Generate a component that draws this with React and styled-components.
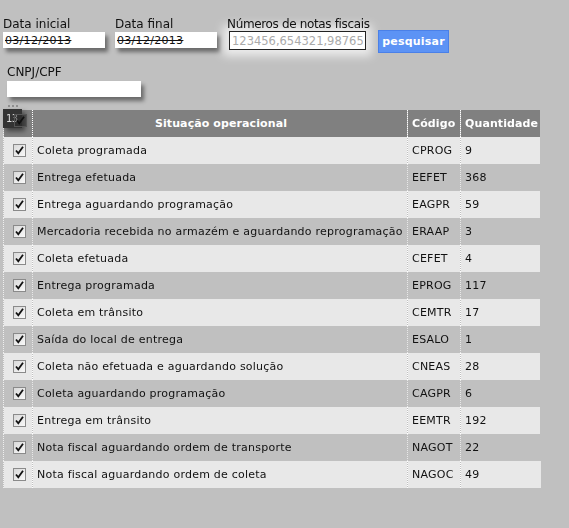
import React from 'react'
import styled, { createGlobalStyle } from 'styled-components'

const GlobalStyle = createGlobalStyle`
  html, body {
    margin: 0;
    background: #c0c0c0;
    font-family: 'DejaVu Sans', Verdana, sans-serif;
    font-size: 11px;
    color: #111;
  }
`

const Page = styled.div`
  padding: 17px 0 0 3px;
  min-height: 528px;
  box-sizing: border-box;
`

const FormRow = styled.div`
  display: flex;
  align-items: flex-start;
`

const Field = styled.div`
  display: flex;
  flex-direction: column;
  width: ${(p) => p.w}px;
  margin-right: ${(p) => p.gap || 10}px;
`

const Label = styled.label`
  position: relative;
  z-index: 1;
  font-size: 12px;
  line-height: 14px;
  height: 15px;
  white-space: nowrap;
  letter-spacing: ${(p) => p.ls || 0}px;
`

const TextInput = styled.input`
  width: ${(p) => p.w}px;
  height: 16px;
  box-sizing: border-box;
  border: none;
  padding: 0 2px;
  margin-top: ${(p) => p.mt || 0}px;
  font-family: 'DejaVu Sans', Verdana, sans-serif;
  font-size: 11px;
  letter-spacing: 0.3px;
  color: #111;
  background: #fff;
  text-decoration: ${(p) => (p.strike ? 'line-through' : 'none')};
  box-shadow: 3px 4px 4px rgba(0, 0, 0, 0.45);
  outline: none;
`

const FocusInput = styled.input`
  width: 137px;
  height: 19px;
  box-sizing: border-box;
  border: 1px solid #222;
  margin: -1px 0 0 2px;
  padding: 0 2px;
  font-family: 'DejaVu Sans', Verdana, sans-serif;
  font-size: 11.5px;
  background: #fff;
  box-shadow: 0 0 10px 6px rgba(255, 255, 255, 0.7);
  outline: none;
  &::placeholder {
    color: #aaa;
  }
`

const SearchButton = styled.button`
  margin-top: 13px;
  width: 71px;
  height: 23px;
  background: #5c93f5;
  border: 1px solid #4a80e8;
  color: #fff;
  font-family: 'DejaVu Sans', Verdana, sans-serif;
  font-weight: bold;
  font-size: 11px;
  letter-spacing: 0.2px;
  padding: 0;
  cursor: pointer;
`

const CnpjBlock = styled.div`
  margin-top: 12px;
  margin-left: 4px;
  display: flex;
  flex-direction: column;
`

const TableWrap = styled.div`
  position: relative;
  margin-top: 13px;
  width: 537px;
`

const Dots = styled.div`
  position: absolute;
  left: 5px;
  top: -5px;
  width: 10px;
  height: 0;
  border-top: 2px dotted #909090;
`

const CountBadge = styled.div`
  position: absolute;
  left: 0;
  top: -1px;
  width: 19px;
  height: 19px;
  background: #333;
  color: #ddd;
  font-size: 10px;
  line-height: 19px;
  padding-left: 3px;
  letter-spacing: -0.5px;
  box-sizing: border-box;
  box-shadow: 3px 3px 5px rgba(0, 0, 0, 0.5);
  z-index: 2;
`

const Table = styled.table`
  border-collapse: collapse;
  table-layout: fixed;
  width: 537px;
  border-left: 1px dotted #eee;
  letter-spacing: 0.23px;
`

const Th = styled.th`
  background: #808080;
  color: #fff;
  font-weight: bold;
  font-size: 11px;
  letter-spacing: 0.1px;
  height: 27px;
  padding: 0 2px 0 4px;
  text-align: ${(p) => p.align || 'left'};
  border-right: 1px dotted #fff;
  white-space: nowrap;
  overflow: hidden;
  &:last-child {
    border-right: none;
  }
`

const Tr = styled.tr`
  background: ${(p) => (p.alt ? '#c0c0c0' : '#e8e8e8')};
`

const Td = styled.td`
  height: 27px;
  padding: 0 3px 0 4px;
  border-right: 1px dotted ${(p) => (p.alt ? '#e8e8e8' : '#fff')};
  white-space: nowrap;
  overflow: hidden;
  &:last-child {
    border-right: none;
  }
`

const CheckCell = styled(Td)`
  padding: 0 0 0 9px;
`

const HeadCheckCell = styled.th`
  background: #808080;
  height: 27px;
  padding: 0 0 0 10px;
  border-right: 1px dotted #fff;
  vertical-align: middle;
`

const OverBadge = styled.span`
  position: relative;
  z-index: 3;
  display: block;
  top: -3px;
`

const Check = ({ dark }) => (
  <svg width="13" height="13" viewBox="0 0 13 13" style={{ display: 'block' }}>
    <defs>
      <linearGradient id="cbg" x1="0" y1="0" x2="1" y2="1">
        <stop offset="0" stopColor="#d8d8d8" />
        <stop offset="1" stopColor="#fafafa" />
      </linearGradient>
    </defs>
    <rect
      x="0.5"
      y="0.5"
      width="12"
      height="12"
      fill={dark ? 'rgba(40,40,40,0.5)' : 'url(#cbg)'}
      stroke={dark ? '#555' : '#8a8a8a'}
    />
    <path d="M3 6.5 L5.3 9.3 L10 2.8" fill="none" stroke="#111" strokeWidth="1.8" />
  </svg>
)

const rows = [
  ['Coleta programada', 'CPROG', 9],
  ['Entrega efetuada', 'EEFET', 368],
  ['Entrega aguardando programação', 'EAGPR', 59],
  ['Mercadoria recebida no armazém e aguardando reprogramação', 'ERAAP', 3],
  ['Coleta efetuada', 'CEFET', 4],
  ['Entrega programada', 'EPROG', 117],
  ['Coleta em trânsito', 'CEMTR', 17],
  ['Saída do local de entrega', 'ESALO', 1],
  ['Coleta não efetuada e aguardando solução', 'CNEAS', 28],
  ['Coleta aguardando programação', 'CAGPR', 6],
  ['Entrega em trânsito', 'EEMTR', 192],
  ['Nota fiscal aguardando ordem de transporte', 'NAGOT', 22],
  ['Nota fiscal aguardando ordem de coleta', 'NAGOC', 49],
]

export default function App() {
  return (
    <>
      <GlobalStyle />
      <Page>
        <FormRow>
          <Field w={102} gap={10}>
            <Label>Data inicial</Label>
            <TextInput w={102} strike defaultValue="03/12/2013" />
          </Field>
          <Field w={102} gap={10}>
            <Label>Data final</Label>
            <TextInput w={102} strike defaultValue="03/12/2013" />
          </Field>
          <Field w={139} gap={12}>
            <Label ls={-0.35}>Números de notas fiscais</Label>
            <FocusInput autoFocus placeholder="123456,654321,987654" />
          </Field>
          <SearchButton>pesquisar</SearchButton>
        </FormRow>
        <CnpjBlock>
          <Label>CNPJ/CPF</Label>
          <TextInput w={134} mt={1} />
        </CnpjBlock>
        <TableWrap>
          <Dots />
          <CountBadge>13</CountBadge>
          <Table>
            <colgroup>
              <col style={{ width: 29 }} />
              <col style={{ width: 375 }} />
              <col style={{ width: 53 }} />
              <col style={{ width: 80 }} />
            </colgroup>
            <thead>
              <tr>
                <HeadCheckCell>
                  <OverBadge>
                    <Check dark />
                  </OverBadge>
                </HeadCheckCell>
                <Th align="center">Situação operacional</Th>
                <Th>Código</Th>
                <Th>Quantidade</Th>
              </tr>
            </thead>
            <tbody>
              {rows.map(([name, code, qty], i) => (
                <Tr key={code} alt={i % 2 === 1}>
                  <CheckCell alt={i % 2 === 1}>
                    <Check />
                  </CheckCell>
                  <Td alt={i % 2 === 1}>{name}</Td>
                  <Td alt={i % 2 === 1}>{code}</Td>
                  <Td alt={i % 2 === 1}>{qty}</Td>
                </Tr>
              ))}
            </tbody>
          </Table>
        </TableWrap>
      </Page>
    </>
  )
}
